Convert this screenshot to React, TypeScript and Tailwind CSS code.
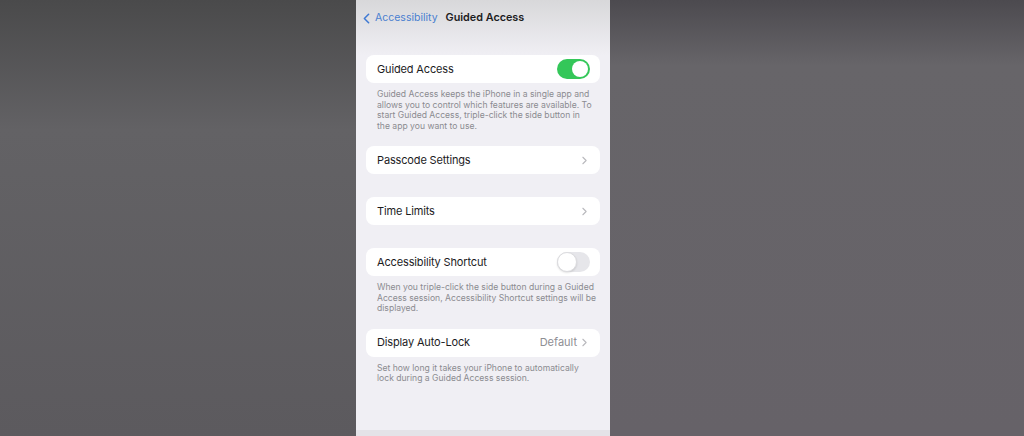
import { ChevronLeft, ChevronRight } from "lucide-react";

type Row = {
  label: string;
  kind: "toggle" | "link";
  on?: boolean;
  value?: string;
  footer?: string[];
  gap: string;
};

const ROWS: Row[] = [
  {
    label: "Guided Access",
    kind: "toggle",
    on: true,
    footer: [
      "Guided Access keeps the iPhone in a single app and",
      "allows you to control which features are available. To",
      "start Guided Access, triple-click the side button in",
      "the app you want to use.",
    ],
    gap: "mt-0",
  },
  { label: "Passcode Settings", kind: "link", gap: "mt-[15px]" },
  { label: "Time Limits", kind: "link", gap: "mt-[23px]" },
  {
    label: "Accessibility Shortcut",
    kind: "toggle",
    on: false,
    footer: [
      "When you triple-click the side button during a Guided",
      "Access session, Accessibility Shortcut settings will be",
      "displayed.",
    ],
    gap: "mt-[23px]",
  },
  {
    label: "Display Auto-Lock",
    kind: "link",
    value: "Default",
    footer: [
      "Set how long it takes your iPhone to automatically",
      "lock during a Guided Access session.",
    ],
    gap: "mt-[15px]",
  },
];

function Toggle({ on }: { on: boolean }) {
  return (
    <div
      className={
        on
          ? "w-[33px] h-[20px] rounded-full bg-[#34c759] flex items-center justify-end px-[2px]"
          : "w-[33px] h-[20px] rounded-full bg-[#e6e6ea] flex items-center justify-start"
      }
    >
      <div
        className={
          on
            ? "w-[16px] h-[16px] rounded-full bg-white"
            : "w-[20px] h-[20px] rounded-full bg-white border border-[#dcdcdf] shadow-[0_1px_2px_rgba(0,0,0,0.12)]"
        }
      />
    </div>
  );
}

function SettingsRow({ row }: { row: Row }) {
  return (
    <div className={row.gap}>
      <div className="h-[28px] mx-[10px] rounded-[8px] bg-white flex items-center pl-[11px] pr-[10px]">
        <span className="flex-1 text-[11px] text-[#1c1c1e] tracking-[-0.15px]">{row.label}</span>
        {row.kind === "toggle" ? (
          <Toggle on={!!row.on} />
        ) : (
          <div className="flex items-center gap-[1px]">
            {row.value && <span className="text-[11px] text-[#8e8e93]">{row.value}</span>}
            <ChevronRight size={13} strokeWidth={2} className="text-[#b9b9bd] -mr-[1px]" />
          </div>
        )}
      </div>
      {row.footer && (
        <div className="mx-[10px] pl-[11px] pt-[6px] text-[8.6px] leading-[10.5px] text-[#8b8b90]">
          {row.footer.map((line) => (
            <div key={line} className="whitespace-nowrap">
              {line}
            </div>
          ))}
        </div>
      )}
    </div>
  );
}

export default function App() {
  return (
    <div className="w-[1024px] h-[436px] flex overflow-hidden font-['Inter','Liberation_Sans',sans-serif]">
      {/* blurred backdrop, left */}
      <div className="w-[356px] h-full bg-gradient-to-b from-[#4a4a4b] via-[#636265] via-30% to-[#5c5a5e]" />

      {/* phone screen */}
      <div className="w-[254px] h-full flex flex-col bg-[#f0eff4] overflow-hidden">
        <div className="h-[55px] bg-gradient-to-b from-[#d8d8da] to-[#f0eff4] pt-[10px]">
          <div className="flex items-center h-[16px] pl-[2px]">
            <ChevronLeft size={17} strokeWidth={2.2} className="text-[#3f7ad3]" />
            <span className="text-[10.5px] text-[#4a80d0]">Accessibility</span>
            <span className="text-[10.8px] font-semibold text-[#1c1c1e] ml-[8px]">Guided Access</span>
          </div>
        </div>

        {ROWS.map((row) => (
          <SettingsRow key={row.label} row={row} />
        ))}

        <div className="flex-1" />
        <div className="h-[6px] bg-[#e4e3e8]" />
      </div>

      {/* blurred backdrop, right */}
      <div className="flex-1 h-full bg-gradient-to-b from-[#4c4a4f] via-[#676569] via-15% to-[#666268]" />
    </div>
  );
}
